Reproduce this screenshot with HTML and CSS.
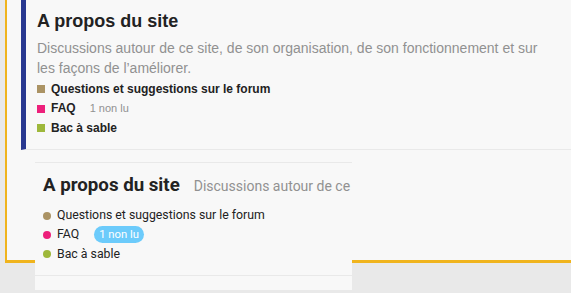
FILE: index.html
```html
<!DOCTYPE html>
<html lang="fr">
<head>
  <meta charset="utf-8">
  <title>A propos du site</title>
  <link rel="stylesheet" href="styles.css">
</head>
<body>
  <div class="frame">
    <div class="category">
      <h3 class="category-title">A propos du site</h3>
      <p class="category-desc">Discussions autour de ce site, de son organisation, de son fonctionnement et sur les façons de l’améliorer.</p>
      <ul class="subcats">
        <li><span class="swatch swatch-tan"></span>Questions et suggestions sur le forum</li>
        <li><span class="swatch swatch-pink"></span>FAQ<span class="unread">1 non lu</span></li>
        <li><span class="swatch swatch-green"></span>Bac à sable</li>
      </ul>
    </div>
  </div>

  <div class="preview">
    <div class="preview-head">
      <h3 class="preview-title">A propos du site</h3>
      <span class="preview-desc">Discussions autour de ce</span>
    </div>
    <ul class="preview-list">
      <li><span class="dot swatch-tan"></span>Questions et suggestions sur le forum</li>
      <li><span class="dot swatch-pink"></span>FAQ<span class="badge">1 non lu</span></li>
      <li><span class="dot swatch-green"></span>Bac à sable</li>
    </ul>
  </div>
</body>
</html>
```

FILE: styles.css
```css
*, *::before, *::after {
  margin: 0;
  padding: 0;
  box-sizing: border-box;
}

body {
  position: relative;
  height: 293px;
  overflow: hidden;
  background-color: #E9E9E9;
  color: #222222;
  font-family: "Liberation Sans", Arial, sans-serif;
}

ul {
  list-style: none;
}

.frame {
  height: 263px;
  margin-left: 5px;
  border-left: 2px solid #F0B41D;
  border-bottom: 3px solid #F0B41D;
  background-color: #F8F8F8;
}

.category {
  margin-left: 14px;
  padding: 10px 0 10.5px 11px;
  border-left: 5px solid #283890;
  border-bottom: 1px solid #E9E9E9;
}

.category-title {
  font-size: 18px;
  font-weight: 700;
  line-height: 22px;
}

.category-desc {
  margin-top: 6px;
  width: 520px;
  color: #919191;
  font-size: 14px;
  line-height: 20px;
}

.subcats {
  margin-top: 1.5px;
}

.subcats li {
  display: flex;
  align-items: center;
  font-size: 12px;
  font-weight: 700;
  line-height: 19.5px;
}

.swatch {
  width: 8px;
  height: 8px;
  margin-right: 6px;
  flex-shrink: 0;
}

.swatch-tan {
  background-color: #AB9364;
}

.swatch-pink {
  background-color: #ED207B;
}

.swatch-green {
  background-color: #9EB83B;
}

.unread {
  margin-left: 14px;
  color: #919191;
  font-size: 11px;
  font-weight: 400;
}

.preview {
  position: absolute;
  left: 35px;
  top: 162px;
  width: 317px;
  height: 128px;
  overflow: hidden;
  padding: 11px 0 0 8px;
  border-top: 1px solid #E9E9E9;
  background-color: #F8F8F8;
  font-family: Roboto, sans-serif;
}

.preview-head {
  display: flex;
  align-items: baseline;
  white-space: nowrap;
}

.preview-title {
  flex-shrink: 0;
  font-size: 18.7px;
  font-weight: 700;
  line-height: 22px;
}

.preview-desc {
  margin-left: 14px;
  color: #919191;
  font-size: 14px;
}

.preview-list {
  margin: 10px 0 0 -8px;
  padding: 0 0 11px 8px;
  border-bottom: 1px solid #E9E9E9;
}

.preview-list li {
  display: flex;
  align-items: center;
  font-size: 12.3px;
  line-height: 19.3px;
}

.dot {
  width: 8px;
  height: 8px;
  margin-right: 6px;
  border-radius: 50%;
  flex-shrink: 0;
}

.badge {
  margin-left: 15px;
  padding: 0 5px;
  border-radius: 9px;
  background-color: #6CCBFB;
  color: #FFFFFF;
  font-size: 11.3px;
  line-height: 17px;
}
```
